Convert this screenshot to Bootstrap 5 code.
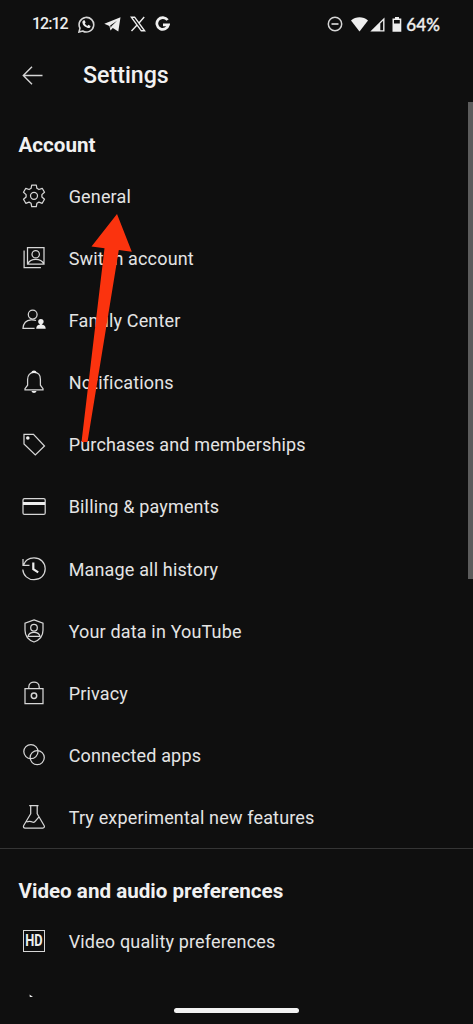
<!DOCTYPE html>
<html lang="en" data-bs-theme="dark">
<head>
<meta charset="utf-8">
<meta name="viewport" content="width=device-width, initial-scale=1">
<title>Settings</title>
<link rel="stylesheet" href="https://cdn.jsdelivr.net/npm/bootstrap@5.3.0/dist/css/bootstrap.min.css">
<style>
  body { background: #0f0f0f; color: #e4e4e4; font-family: Roboto, sans-serif; }
  .screen { width: 473px; height: 1024px; }
  svg { display: block; flex: none; }
  .status { height: 47px; padding: 1px 33px 0 32px; font: 600 16px/1 "Open Sans", sans-serif; color: #eee; }
  .clock { width: 36px; font: 500 16px/1 Roboto, sans-serif; letter-spacing: -1px; }
  .percent { font: 500 17px/1 Lato, sans-serif; letter-spacing: .1px; -webkit-text-stroke: .35px #eee; }
  .appbar { height: 57px; padding-left: 22px; }
  .appbar h1 { font-size: 23.2px; font-weight: 500; line-height: 1; margin-left: 39px; color: #f1f1f1; }
  .group-title { font-size: 20.6px; font-weight: 700; line-height: 1; color: #f1f1f1; padding-left: 18.5px; }
  .entry { height: 62.15px; padding-left: 22.3px; gap: 22.4px; font-size: 18px; letter-spacing: .16px; line-height: 1; }
  .entry .label { padding-top: 1.4px; }
  .line { fill: none; stroke: #d6d6d6; stroke-width: 1.25; }
  .solid { fill: #eee; stroke: none; }
  .hd { width: 22px; height: 22px; margin: 0 1px; border: 1.5px solid #d6d6d6; font: 700 16px/20px "Roboto", sans-serif; letter-spacing: 0; color: #eee; }
  .hd span { transform: scaleX(.8); }
  .divider { height: 1px; margin-top: -.65px; background: #353535; }
  .thumb { right: 0; top: 102px; width: 5px; height: 477px; background: #5c5c5c; }
  .pointer { left: 0; top: 0; pointer-events: none; }
  .home-bar { left: 174px; top: 1007.5px; width: 125px; height: 5px; background: #f2f2f2; }
</style>
</head>
<body>
<main class="screen position-relative overflow-hidden">
  <header class="status d-flex align-items-center">
    <span class="clock">12:12</span>
    <svg width="17" height="17" viewBox="0 0 17 17" style="margin-left:10px"><path class="line" style="stroke-width:1.6" d="M1 16l1-3.8A7.3 7.3 0 1 1 4.7 15z"/><path class="solid" d="M5.2 4.4l1.5-.1.9 2.2-.8 1c.7 1.2 1.5 1.9 2.6 2.4l1-1.1 2.1 1.1c0 1.7-1.4 2.4-2.6 2.1C6.800 11.200 4.800 9 4.400 6.800c-.1-1 .2-1.900.8-2.400z"/></svg>
    <svg width="17" height="15" viewBox="0 0 17 15" style="margin-left:9px"><path class="solid" d="M.3 6.800L16.500.3 14.300 14.500 8.800 11 6.500 13.600 5.400 9zM6.200 8.600l.7 2.500.5-1.800 5.700-5.500z" fill-rule="evenodd"/></svg>
    <svg width="16" height="16" viewBox="0 0 16 16" style="margin-left:9px"><path class="line" style="stroke-width:1.4;stroke:#eee" d="M1.300 1.200h3.300l10 13.600h-3.300zM14.200 1L9 7M6.900 9.300L1.500 15"/></svg>
    <svg width="15" height="16" viewBox="0 0 15 16" style="margin-left:9px"><path class="line" style="stroke-width:2.700;stroke:#eee" d="M12.600 4.100A5.900 5.900 0 1 0 13.500 8.800H8"/></svg>
    <svg class="ms-auto" width="16" height="16" viewBox="0 0 16 16"><circle class="line" style="stroke-width:1.500" cx="8" cy="8" r="6.700"/><path class="line" style="stroke-width:1.700" d="M4.500 8h7"/></svg>
    <svg width="17" height="15" viewBox="0 0 17 15" style="margin-left:8px"><path class="solid" d="M0 3.500C4.800-.7 12.200-.7 17 3.500L8.500 14.500z"/></svg>
    <svg width="15" height="15" viewBox="0 0 15 15" style="margin-left:2px"><path class="solid" fill-rule="evenodd" d="M.3 14.500L14.500.5v14zM10.300 6.500v6.700h2.800V3.700z"/></svg>
    <svg width="10" height="15" viewBox="0 0 10 15" style="margin-left:7px"><path class="solid" fill-rule="evenodd" d="M3 0h4v1.500h2.300v13.300H.5V1.500H3zM2 3v3.500h5.800V3z"/></svg>
    <span class="percent" style="margin-left:4px">64%</span>
  </header>

  <nav class="appbar d-flex align-items-center">
    <svg width="22" height="20" viewBox="0 0 22 20"><path class="line" style="stroke-width:1.400" d="M20.500 9.500H1.500M10 .8L1.300 9.500 10 18.200"/></svg>
    <h1 class="mb-0">Settings</h1>
  </nav>

  <section>
    <div class="d-flex align-items-center" style="height:61px"><h2 class="group-title mb-0" style="padding-top:21.600px">Account</h2></div>
    <ul class="list-unstyled mb-0">
      <li class="entry d-flex align-items-center"><svg width="24" height="24" viewBox="0 0 24 24"><path class="line" stroke-linejoin="round" d="M9.700 1h4.600l.6 3.300 2 1.200 3.300-1.200 2.300 4-2.600 2.300v2.400l2.600 2.300-2.300 4-3.300-1.200-2 1.200-.6 3.300H9.700l-.6-3.300-2-1.200-3.300 1.200-2.300-4L4.100 13v-2.400L1.500 8.300l2.300-4 3.300 1.200 2-1.200z"/><circle class="line" cx="12" cy="11.800" r="3.500"/></svg><span class="label">General</span></li>
      <li class="entry d-flex align-items-center"><svg width="24" height="24" viewBox="0 0 24 24"><path class="line" d="M5.500 1.500h16.500v16.500H5.500zM2.100 4.500v17h16.800M6 17.500c1.500-3.400 4.200-4.200 7.700-4.200s6.300.8 7.900 4.200"/><circle class="line" cx="13.700" cy="8.200" r="3.700"/></svg><span class="label">Switch account</span></li>
      <li class="entry d-flex align-items-center"><svg width="24" height="24" viewBox="0 0 24 24"><circle class="line" cx="10.700" cy="6.600" r="4.400"/><path class="line" d="M12.600 20.300H1c.4-5.800 3.800-8.200 8-8.500 2.300-.1 3.700.1 5 .7"/><circle class="solid" cx="18.900" cy="13.600" r="2.700"/><path class="solid" d="M14.200 20.700c.1-3 1.700-4.200 4.700-4.200s4.700 1.200 4.800 4.200z"/><path class="solid" d="M17.900 15h2v2.500h-2z"/></svg><span class="label">Family Center</span></li>
      <li class="entry d-flex align-items-center"><svg width="24" height="24" viewBox="0 0 24 24"><path class="line" d="M12 2.400c-4 0-6.400 2.800-6.400 7v5.800L3 18.700v1.200h18v-1.200l-2.600-3.500V9.400c0-4.200-2.400-7-6.400-7z"/><path class="solid" d="M9.300 3c.2-3.300 5.200-3.300 5.400 0zM9.500 21h5c-.4 2.600-4.600 2.600-5 0z"/></svg><span class="label">Notifications</span></li>
      <li class="entry d-flex align-items-center"><svg width="24" height="24" viewBox="0 0 24 24"><path class="line" d="M2 1.300h9.500L22.500 13 13.300 22 2 11z"/><circle class="solid" cx="5.800" cy="5" r="1.800"/></svg><span class="label">Purchases and memberships</span></li>
      <li class="entry d-flex align-items-center"><svg width="24" height="24" viewBox="0 0 24 24"><rect class="line" x="1" y="3.600" width="22.200" height="15.800" rx="1.500"/><path class="solid" d="M1 7h22v3H1z"/></svg><span class="label">Billing &amp; payments</span></li>
      <li class="entry d-flex align-items-center"><svg width="24" height="24" viewBox="0 0 24 24"><path class="line" d="M1 2v6.300h6.500M1.500 8C3 3.700 7 .9 12 .9c6.500 0 11.200 4.700 11.200 10.900S18.500 22.700 12 22.700C6 22.700 1.200 18.500.8 12.500"/><path class="line" style="stroke:#eee;stroke-width:2.200" d="M11.300 5.500v6.700l4.900 3.200"/></svg><span class="label">Manage all history</span></li>
      <li class="entry d-flex align-items-center"><svg width="24" height="24" viewBox="0 0 24 24"><path class="line" d="M12 .8l9 3.300v7.100c0 5.300-3.300 9.700-9 11.800-5.700-2.100-9-6.500-9-11.800V4.100z"/><circle class="line" cx="12" cy="8.700" r="3.300"/><path class="line" d="M6 17.300c.7-3 2.500-4 6-4s5.300 1 6 4z"/></svg><span class="label">Your data in YouTube</span></li>
      <li class="entry d-flex align-items-center"><svg width="24" height="24" viewBox="0 0 24 24"><path class="line" d="M3 7.500h18v15H3zM6.800 7.300V6c0-6.500 10.400-6.500 10.400 0v1.300"/><circle class="line" style="stroke-width:1.500" cx="12" cy="14.700" r="2.700"/></svg><span class="label">Privacy</span></li>
      <li class="entry d-flex align-items-center"><svg width="24" height="24" viewBox="0 0 24 24"><circle class="line" cx="8.900" cy="8.600" r="7.100"/><circle class="line" cx="15.200" cy="14.600" r="7.100"/></svg><span class="label">Connected apps</span></li>
      <li class="entry d-flex align-items-center"><svg width="24" height="24" viewBox="0 0 24 24"><path class="line" stroke-linejoin="round" d="M7.200.7h9.300M8.700.7v8.100L1.700 20.500c-.7 1.500 0 2.500 1.400 2.500h17.700c1.400 0 2.100-1 1.300-2.500L15.200 8.800V.7M4.500 17c3-1.500 4.500-.8 6.500.2 1.500.6 2.300-1 3.400-2.300l2.600-3"/></svg><span class="label">Try experimental new features</span></li>
    </ul>
  </section>

  <div class="divider"></div>

  <section>
    <div class="d-flex align-items-center" style="height:61.5px"><h2 class="group-title mb-0" style="padding-top:22.500px">Video and audio preferences</h2></div>
    <ul class="list-unstyled mb-0">
      <li class="entry d-flex align-items-center"><span class="hd d-flex align-items-center justify-content-center"><span>HD</span></span><span class="label">Video quality preferences</span></li>
      <li style="padding:21px 0 0 29px"><svg width="5" height="4" viewBox="0 0 5 4"><path class="solid" d="M.5.5L4 3H.8z"/></svg></li>
    </ul>
  </section>

  <div class="thumb position-absolute"></div>
  <svg class="pointer position-absolute" width="473" height="1024" viewBox="0 0 473 1024"><path fill="#fb330e" d="M117 214L91.500 246.500l13 1.700L81.500 442h6L118.800 250l13 1.800z"/></svg>
  <div class="home-bar position-absolute rounded-pill"></div>
</main>
<script src="https://cdn.jsdelivr.net/npm/bootstrap@5.3.0/dist/js/bootstrap.bundle.min.js"></script>
</body>
</html>
